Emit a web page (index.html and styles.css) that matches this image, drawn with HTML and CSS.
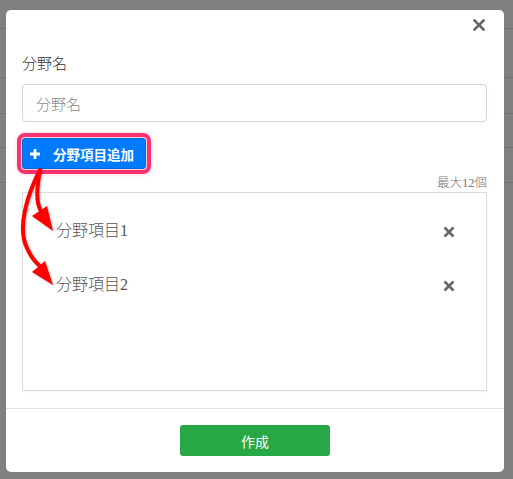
FILE: index.html
```html
<!DOCTYPE html>
<html lang="ja">
<head>
<meta charset="utf-8">
<link rel="stylesheet" href="styles.css">
</head>
<body>
<div class="page">
  <div class="prow r1"></div>
  <div class="prow r2"></div>
  <div class="prow r3"></div>
  <div class="prow r4"></div>
  <div class="prow r5"></div>
</div>
<div class="modal">
  <div class="modal-header">
    <button class="close" aria-label="close">
      <svg viewBox="0 0 12 12" width="12" height="12"><path d="M1.5 1.5 L10.5 10.5 M10.5 1.5 L1.5 10.5" stroke="#666" stroke-width="2.6" stroke-linecap="square"/></svg>
    </button>
  </div>
  <div class="modal-body">
    <label class="label">分野名</label>
    <input class="input" type="text" placeholder="分野名">
    <div class="add-wrap">
      <button class="add-btn">
        <svg viewBox="0 0 10 10" width="10" height="10"><path d="M5 0 V10 M0 5 H10" stroke="#fff" stroke-width="2.8"/></svg>
        <span>分野項目追加</span>
      </button>
    </div>
    <div class="max">最大12個</div>
    <div class="list">
      <div class="item">
        <span class="item-text">分野項目1</span>
        <svg class="x" viewBox="0 0 12 12" width="12" height="12"><path d="M1.5 1.5 L10.5 10.5 M10.5 1.5 L1.5 10.5" stroke="#666" stroke-width="2.6"/></svg>
      </div>
      <div class="item">
        <span class="item-text">分野項目2</span>
        <svg class="x" viewBox="0 0 12 12" width="12" height="12"><path d="M1.5 1.5 L10.5 10.5 M10.5 1.5 L1.5 10.5" stroke="#666" stroke-width="2.6"/></svg>
      </div>
    </div>
  </div>
  <div class="modal-footer">
    <button class="create">作成</button>
  </div>
  <svg class="arrows" width="80" height="300" viewBox="0 0 80 300">
    <g transform="translate(-6,-10)" fill="none" stroke="#ff0000" stroke-width="4" stroke-linecap="round">
      <path d="M40 170 C37 188 35 202 42 213"/>
      <path d="M40 170 C27 195 17 228 27 248 C31 257 35 262 40 266"/>
    </g>
    <g transform="translate(-6,-10)" fill="#ff0000">
      <polygon points="53,231 32,216 47,206"/>
      <polygon points="53,285 32,272 45,261"/>
    </g>
  </svg>
</div>
</body>
</html>
```
FILE: styles.css
```css
html, body {
  margin: 0;
  padding: 0;
}
body {
  background: #808080;
  width: 513px;
  height: 479px;
  overflow: hidden;
  position: relative;
  font-family: "Liberation Serif", "Noto Sans CJK JP", serif;
}
.page {
  display: flex;
  flex-direction: column;
}
.prow {
  border-bottom: 1px solid #727272;
  box-sizing: border-box;
}
.r1 { height: 29px; }
.r2 { height: 49px; }
.r3 { height: 36px; }
.r4 { height: 34px; }
.r5 { height: 35px; }

.modal {
  position: absolute;
  left: 6px;
  top: 10px;
  width: 498px;
  height: 462px;
  background: #fff;
  border-radius: 5px;
  display: flex;
  flex-direction: column;
  box-sizing: border-box;
}
.modal-header {
  height: 32px;
  display: flex;
  justify-content: flex-end;
  align-items: flex-start;
  padding: 9px 19px 0 0;
  box-sizing: border-box;
}
.close {
  border: 0;
  background: none;
  padding: 0;
  width: 12px;
  height: 12px;
  display: flex;
}
.modal-body {
  padding: 0 17px 0 16px;
  display: flex;
  flex-direction: column;
  flex: 1;
}
.label {
  margin-top: 10px;
  font-size: 15px;
  line-height: 22px;
  color: #333;
  font-weight: 300;
  font-family: "Noto Sans CJK JP", sans-serif;
}
.input {
  margin-top: 10px;
  height: 38px;
  box-sizing: border-box;
  border: 1px solid #ced4da;
  border-radius: 4px;
  padding: 0 13px;
  font-size: 15px;
  font-weight: 300;
  font-family: "Noto Sans CJK JP", sans-serif;
  color: #333;
  outline: none;
}
.input::placeholder {
  color: #8a8a8a;
}
.add-wrap {
  margin-top: 16px;
  display: flex;
}
.add-btn {
  height: 31px;
  width: 124px;
  background: #007bff;
  border: 1px solid #0069d9;
  border-radius: 3px;
  color: #fff;
  font-weight: bold;
  font-size: 13.5px;
  font-family: "Noto Sans CJK JP", sans-serif;
  display: flex;
  align-items: center;
  justify-content: flex-start;
  gap: 13px;
  padding: 0 0 0 7px;
  outline: 4px solid #fb3270;
  outline-offset: 1px;
  box-shadow: 0 0 4px 5px rgba(251, 50, 112, 0.25);
}
.max {
  margin-top: 5px;
  text-align: right;
  font-size: 12.5px;
  line-height: 18px;
  color: #777;
  font-weight: 300;
}
.list {
  margin-top: 0;
  height: 199px;
  box-sizing: border-box;
  border: 1px solid #dcdcdc;
  box-shadow: 0 1px 2px rgba(0,0,0,0.06);
  padding: 12px 0 0 33px;
  display: flex;
  flex-direction: column;
}
.item {
  height: 54px;
  display: flex;
  align-items: center;
  justify-content: space-between;
  padding-right: 31px;
}
.item-text {
  font-size: 16px;
  color: #555;
  font-weight: 300;
  margin-top: -6px;
}
.x {
  width: 12px;
  height: 12px;
}
.modal-footer {
  border-top: 1px solid #dee2e6;
  height: 64px;
  display: flex;
  align-items: flex-start;
  justify-content: center;
  padding-top: 16px;
  box-sizing: border-box;
}
.create {
  width: 150px;
  height: 31px;
  background: #28a745;
  border: 0;
  border-radius: 3px;
  color: #fff;
  font-size: 14px;
  font-family: "Noto Sans CJK JP", sans-serif;
}
.arrows {
  position: absolute;
  left: 0;
  top: 0;
  overflow: visible;
  filter: drop-shadow(1px 1px 1px rgba(0,0,0,0.25));
}
```
